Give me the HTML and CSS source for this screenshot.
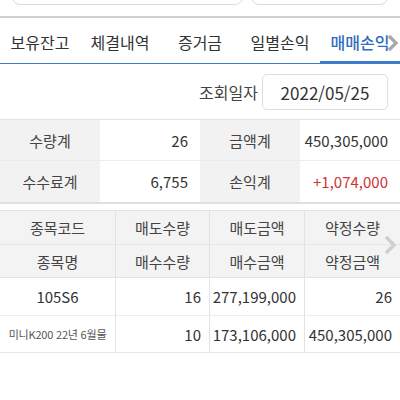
FILE: index.html
```html
<!DOCTYPE html>
<html lang="ko">
<head>
<meta charset="utf-8">
<link rel="stylesheet" href="styles.css">
</head>
<body>
<div class="top">
  <div class="box box-a"></div>
  <div class="box box-b"></div>
</div>
<div class="divider"></div>
<nav class="tabs">
  <div class="tab">보유잔고</div>
  <div class="tab">체결내역</div>
  <div class="tab">증거금</div>
  <div class="tab">일별손익</div>
  <div class="tab active">매매손익</div>
  <svg class="tab-arrow" width="12" height="18" viewBox="0 0 12 18"><polyline points="2,2 9,9 2,16" fill="none" stroke="#a8a8a8" stroke-width="3.2"/></svg>
</nav>
<div class="date-row">
  <span class="date-label">조회일자</span>
  <div class="date-box">2022/05/25</div>
</div>
<div class="summary">
  <div class="s-label">수량계</div>
  <div class="s-val">26</div>
  <div class="s-label">금액계</div>
  <div class="s-val">450,305,000</div>
  <div class="s-label">수수료계</div>
  <div class="s-val">6,755</div>
  <div class="s-label">손익계</div>
  <div class="s-val red">+1,074,000</div>
</div>
<div class="grid-wrap">
  <div class="grid">
    <div class="h">종목코드</div>
    <div class="h">매도수량</div>
    <div class="h">매도금액</div>
    <div class="h">약정수량</div>
    <div class="h h2">종목명</div>
    <div class="h h2">매수수량</div>
    <div class="h h2">매수금액</div>
    <div class="h h2">약정금액</div>
    <div class="d c">105S6</div>
    <div class="d r">16</div>
    <div class="d r">277,199,000</div>
    <div class="d r">26</div>
    <div class="d c small d2">미니K200 22년 6월물</div>
    <div class="d r d2">10</div>
    <div class="d r d2">173,106,000</div>
    <div class="d r d2">450,305,000</div>
  </div>
  <svg class="grid-arrow" width="14" height="22" viewBox="0 0 14 22"><polyline points="3,3 11,11 3,19" fill="none" stroke="#cfcfcf" stroke-width="3.5"/></svg>
</div>
</body>
</html>
```
FILE: styles.css
```css
* { box-sizing: border-box; }
body {
  margin: 0;
  width: 400px;
  background: #fff;
  font-family: "Noto Sans CJK KR", "Noto Sans", sans-serif;
  color: #333;
}
.top {
  height: 16px;
  overflow: hidden;
  display: flex;
  gap: 8px;
  padding: 0 12px;
}
.box {
  height: 32px;
  margin-top: -27px;
  border: 1px solid #dcdcdc;
  border-radius: 8px;
}
.box-a { width: 231px; }
.box-b { width: 137px; }
.divider {
  height: 2px;
  background: #cfcfcf;
}
.tabs {
  position: relative;
  display: flex;
  height: 46px;
  border-bottom: 1px solid #3d7ccb;
}
.tab {
  width: 80px;
  height: 45px;
  display: flex;
  align-items: center;
  justify-content: center;
  font-size: 16px;
  color: #333;
  padding-top: 2px;
}
.tab.active {
  color: #2f6cc0;
  font-weight: 500;
  height: 46px;
  margin-bottom: -1px;
  border-bottom: 3px solid #3d7ccb;
  padding-top: 4px;
}
.tab-arrow {
  position: absolute;
  left: 387px;
  top: 16px;
}
.date-row {
  display: flex;
  justify-content: flex-end;
  align-items: center;
  gap: 4px;
  padding: 10px 12px 9px 0;
}
.date-label {
  font-size: 16px;
  color: #444;
}
.date-box {
  width: 126px;
  height: 36px;
  border: 1px solid #dedede;
  border-radius: 5px;
  display: flex;
  align-items: center;
  justify-content: center;
  font-size: 17px;
  color: #333;
}
.summary {
  display: grid;
  grid-template-columns: 100px 100px 100px 100px;
  border-top: 1px solid #e2e2e2;
  border-bottom: 2px solid #e0e0e0;
}
.summary > div {
  height: 41px;
  display: flex;
  align-items: center;
  font-size: 15px;
}
.summary > div:nth-child(-n+4) {
  border-bottom: 1px solid #ececec;
}
.s-label {
  background: #f2f2f2;
  justify-content: center;
  color: #444;
}
.s-val {
  justify-content: flex-end;
  padding-right: 12px;
  color: #333;
}
.red { color: #cf3535; }
.grid-wrap {
  position: relative;
  margin-top: 6px;
}
.grid {
  display: grid;
  grid-template-columns: 115px 94px 95px 96px;
  border-bottom: 1px solid #e6e6e6;
}
.grid > div {
  display: flex;
  align-items: center;
  font-size: 15px;
  white-space: nowrap;
  border-left: 1px solid #e2e2e2;
}
.grid > div:nth-child(4n+1) { border-left: none; }
.h {
  height: 34px;
  background: #f3f3f3;
  justify-content: center;
  color: #444;
  border-top: 1px solid #e2e2e2;
}
.h2 {
  border-top: 1px solid #e6e6e6;
  border-bottom: 1px solid #e2e2e2;
}
.d {
  height: 37px;
  color: #333;
}
.d2 { border-top: 1px solid #ececec; }
.c { justify-content: center; }
.r { justify-content: flex-end; padding-right: 8px; }
.grid > .small { font-size: 11px; letter-spacing: -0.2px; color: #555; }
.grid-arrow {
  position: absolute;
  left: 383px;
  top: 24px;
}
```
